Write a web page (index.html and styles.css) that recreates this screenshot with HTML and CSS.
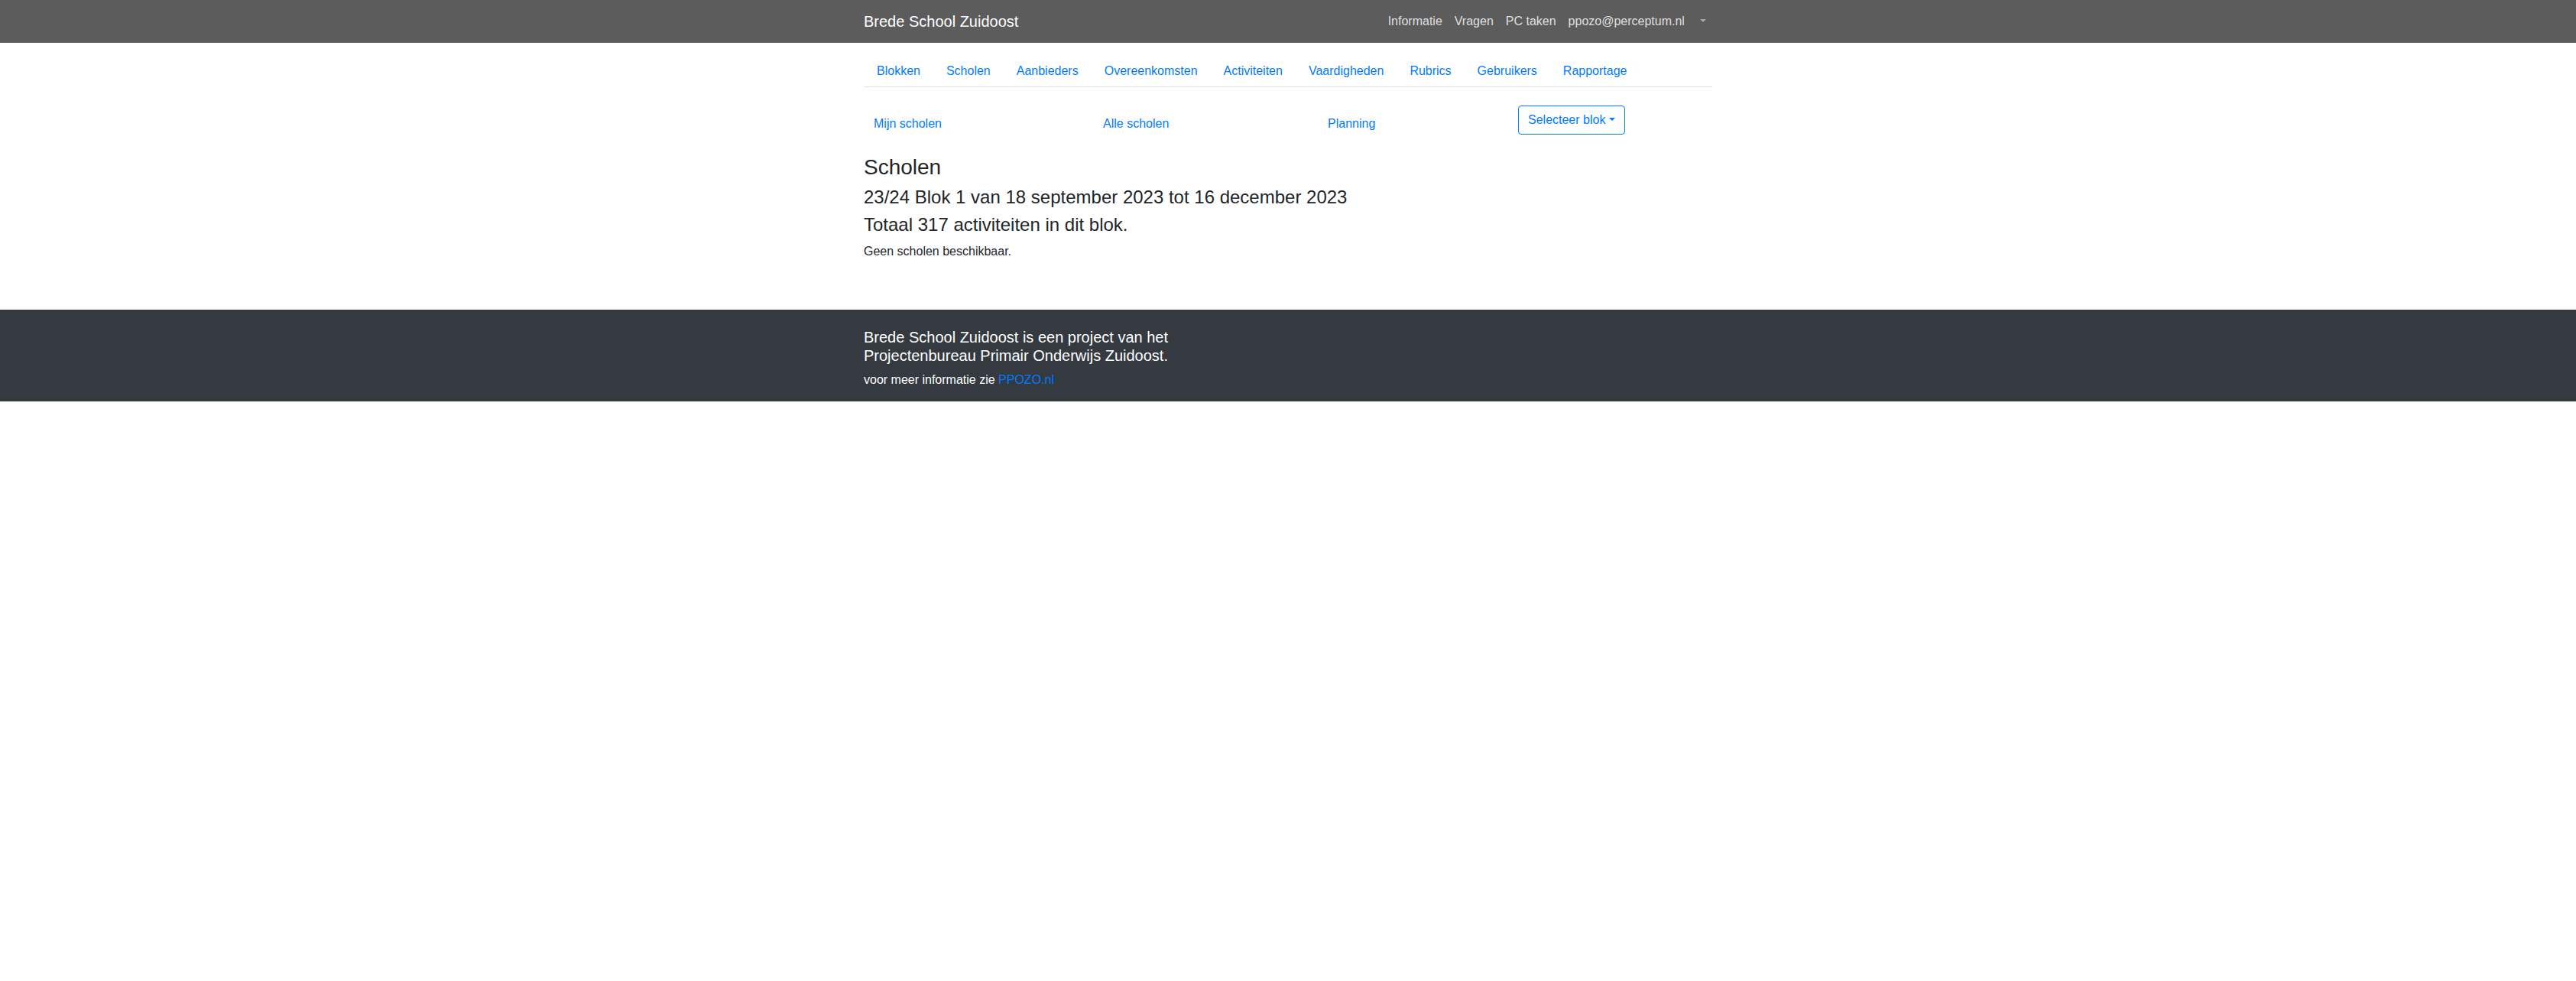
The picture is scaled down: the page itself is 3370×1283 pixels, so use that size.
FILE: index.html
```html
<!DOCTYPE html>
<html lang="nl">
<head>
<meta charset="utf-8">
<title>Brede School Zuidoost - Scholen</title>
<link rel="stylesheet" href="styles.css">
</head>
<body>
<nav class="navbar">
  <div class="container navbar-inner">
    <a class="brand" href="#">Brede School Zuidoost</a>
    <ul class="navbar-nav">
      <li><a class="nav-link" href="#">Informatie</a></li>
      <li><a class="nav-link" href="#">Vragen</a></li>
      <li><a class="nav-link" href="#">PC taken</a></li>
      <li><a class="nav-link" href="#">ppozo@perceptum.nl</a></li>
      <li><a class="nav-link toggle-only" href="#"><span class="caret"></span></a></li>
    </ul>
  </div>
</nav>

<main class="container main">
  <ul class="nav-tabs">
    <li><a class="tab-link" href="#">Blokken</a></li>
    <li><a class="tab-link" href="#">Scholen</a></li>
    <li><a class="tab-link" href="#">Aanbieders</a></li>
    <li><a class="tab-link" href="#">Overeenkomsten</a></li>
    <li><a class="tab-link" href="#">Activiteiten</a></li>
    <li><a class="tab-link" href="#">Vaardigheden</a></li>
    <li><a class="tab-link" href="#">Rubrics</a></li>
    <li><a class="tab-link" href="#">Gebruikers</a></li>
    <li><a class="tab-link" href="#">Rapportage</a></li>
  </ul>

  <div class="subnav">
    <a class="sub-link" href="#">Mijn scholen</a>
    <a class="sub-link" href="#">Alle scholen</a>
    <a class="sub-link" href="#">Planning</a>
    <div class="sub-drop">
      <button class="btn-outline" type="button">Selecteer blok <span class="caret"></span></button>
    </div>
  </div>

  <h3 class="title">Scholen</h3>
  <h4 class="subtitle">23/24 Blok 1 van 18 september 2023 tot 16 december 2023</h4>
  <h4 class="subtitle">Totaal 317 activiteiten in dit blok.</h4>
  <p class="text">Geen scholen beschikbaar.</p>
</main>

<footer class="footer">
  <div class="container">
    <h5 class="footer-title">Brede School Zuidoost is een project van het Projectenbureau Primair Onderwijs Zuidoost.</h5>
    <p class="footer-text">voor meer informatie zie <a class="footer-link" href="#">PPOZO.nl</a></p>
  </div>
</footer>
</body>
</html>
```

FILE: styles.css
```css
* {
  box-sizing: border-box;
}

html, body {
  margin: 0;
  padding: 0;
  background: #fff;
}

body {
  font-family: "Liberation Sans", Arial, sans-serif;
  font-size: 16px;
  line-height: 1.5;
  color: #212529;
}

a {
  text-decoration: none;
}

ul {
  list-style: none;
  margin: 0;
  padding: 0;
}

.container {
  width: 1140px;
  margin: 0 auto;
  padding: 0 15px;
}

/* Navbar */
.navbar {
  background: #5c5c5c;
  padding: 8px 0;
}

.navbar-inner {
  display: flex;
  align-items: center;
  justify-content: space-between;
}

.brand {
  color: #fff;
  font-size: 20px;
  line-height: 30px;
  padding: 5px 0;
  margin-right: 16px;
}

.navbar-nav {
  display: flex;
  align-items: center;
}

.nav-link {
  display: block;
  padding: 8px;
  color: rgba(255, 255, 255, 0.82);
  line-height: 24px;
}

.nav-link.toggle-only {
  color: rgba(255, 255, 255, 0.45);
}

.caret {
  display: inline-block;
  margin-left: 0.255em;
  vertical-align: 0.255em;
  width: 0;
  height: 0;
  border-top: 0.3em solid;
  border-right: 0.3em solid transparent;
  border-left: 0.3em solid transparent;
  border-bottom: 0;
}

.btn-outline .caret {
  margin-left: 0;
}

/* Main */
.main {
  padding-bottom: 1px;
}

/* Tabs */
.nav-tabs {
  display: flex;
  margin-top: 16px;
  border-bottom: 1px solid #dee2e6;
}

.nav-tabs li {
  margin-bottom: -1px;
}

.tab-link {
  display: block;
  padding: 8px 16px;
  border: 1px solid transparent;
  border-radius: 4px 4px 0 0;
  color: #007bff;
  line-height: 24px;
}

/* Sub navigation */
.subnav {
  display: grid;
  grid-template-columns: 300px 294px 262px 1fr;
  align-items: start;
  margin-top: 24px;
}

.sub-link {
  display: block;
  padding: 12px 13px 0;
  color: #007bff;
  line-height: 24px;
}

.btn-outline {
  display: inline-block;
  font-family: inherit;
  font-size: 16px;
  line-height: 24px;
  padding: 6px 12px;
  color: #007bff;
  background: transparent;
  border: 1px solid #007bff;
  border-radius: 4px;
  cursor: pointer;
}

/* Content */
.title {
  margin: 26px 0 8px;
  font-size: 28px;
  font-weight: 500;
  line-height: 1.2;
}

.subtitle {
  margin: 0 0 8px;
  font-size: 24px;
  font-weight: 500;
  line-height: 1.2;
}

.text {
  margin: 2px 0 0;
}

/* Footer */
.footer {
  margin-top: 63px;
  background: #343a40;
  color: #fff;
  padding-top: 24px;
}

.footer-title {
  margin: 0 0 8px;
  max-width: 445px;
  font-size: 20px;
  font-weight: 500;
  line-height: 1.2;
}

.footer-text {
  margin: 0;
  padding-bottom: 16px;
}

.footer-link {
  color: #007bff;
}
```
